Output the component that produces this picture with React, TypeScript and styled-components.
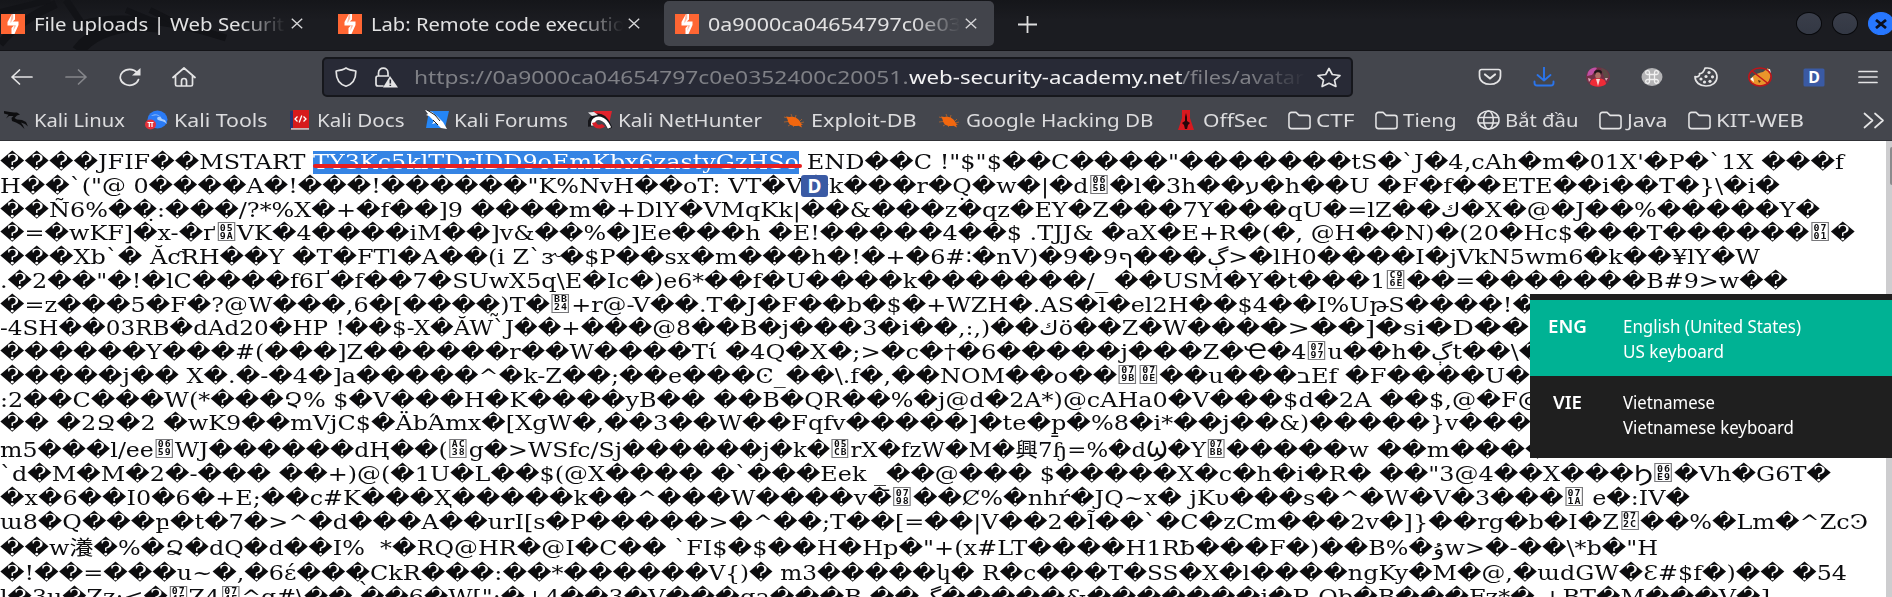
import React, { useLayoutEffect, useRef } from "react";
import styled, { createGlobalStyle } from "styled-components";

const Global = createGlobalStyle`
  html, body { margin: 0; padding: 0; overflow: hidden; background: #fff; }
  * { box-sizing: border-box; }
`;

const SANS = `"Noto Sans", "Open Sans", sans-serif`;

/* ---------- text stretched to a given width ---------- */

const FitBox = styled.span<{ $w: number }>`
  display: block;
  flex: none;
  width: ${(p) => p.$w}px;
  white-space: pre;
`;
const FitInner = styled.span`
  display: inline-block;
  white-space: pre;
  transform-origin: 0 50%;
`;

function Fit({ w, children }: { w: number; children: React.ReactNode }) {
  const ref = useRef<HTMLSpanElement>(null);
  useLayoutEffect(() => {
    const el = ref.current;
    if (!el) return;
    el.style.transform = "none";
    const natural = el.getBoundingClientRect().width;
    if (natural > 0) el.style.transform = `scaleX(${w / natural})`;
  });
  return (
    <FitBox $w={w}>
      <FitInner ref={ref}>{children}</FitInner>
    </FitBox>
  );
}

/* ---------- frame ---------- */

const Screen = styled.div`
  position: relative;
  width: 1892px;
  height: 597px;
  overflow: hidden;
  display: flex;
  flex-direction: column;
  background: #fff;
  font-family: ${SANS};
`;

/* ---------- tab strip ---------- */

const TabStrip = styled.div`
  position: relative;
  flex: none;
  height: 51px;
  display: flex;
  align-items: flex-start;
  padding-top: 1px;
  background: linear-gradient(#15161a, #1b1c21 40%, #1b1c21);
  border-bottom: 1px solid #131317;
`;
const Watermark = styled.svg`
  position: absolute;
  left: 0;
  top: 0;
`;
const Tab = styled.div<{ $active?: boolean; $first?: boolean }>`
  position: relative;
  flex: none;
  width: 330px;
  height: 45px;
  margin-left: ${(p) => (p.$first ? -10 : 7)}px;
  padding-left: 11px;
  display: flex;
  align-items: center;
  border-radius: 5px;
  background: ${(p) => (p.$active ? "#42444b" : "transparent")};
`;
const TabTitle = styled.div`
  width: 254px;
  margin-left: 9px;
  overflow: hidden;
  color: #e2e2e3;
  font-size: 18px;
  line-height: 28px;
  mask-image: linear-gradient(90deg, #000 205px, transparent 252px);
`;
const TabClose = styled.svg`
  margin-left: 3px;
  flex: none;
`;
const NewTab = styled.svg`
  margin: 15px 0 0 24px;
  flex: none;
`;
const WindowButtons = styled.div`
  display: flex;
  gap: 10px;
  margin: 11px -2px 0 auto;
`;
const WindowButton = styled.div<{ $close?: boolean }>`
  width: 26px;
  height: 23px;
  border-radius: 50%;
  display: flex;
  align-items: center;
  justify-content: center;
  border: 1px solid ${(p) => (p.$close ? "#2777ff" : "#08090c")};
  background: ${(p) => (p.$close ? "#2777ff" : "linear-gradient(#3a3e4a, #333844)")};
`;

/* ---------- navigation bar ---------- */

const NavBar = styled.div`
  flex: none;
  height: 50px;
  display: flex;
  align-items: center;
  background: #44464d;
  padding: 2px 11px 0 10px;
`;
const NavButtons = styled.div`
  flex: none;
  width: 312px;
  display: flex;
  align-items: center;
  gap: 30px;
`;
const UrlBar = styled.div`
  flex: none;
  width: 1031px;
  height: 40px;
  display: flex;
  align-items: center;
  padding: 0 9px 0 11px;
  border: 2px solid #16171c;
  border-radius: 5px;
  background: #282a36;
  font-size: 18.5px;
  line-height: 28px;
  svg { flex: none; }
`;
const Lock = styled.svg`
  margin-left: 17px;
`;
const UrlText = styled.div`
  display: flex;
  flex: none;
  width: 894px;
  margin: 0 auto 0 16px;
  color: #7f8086;
  mask-image: linear-gradient(90deg, #000 835px, transparent 892px);
`;
const Host = styled.span`
  color: #f2f2f3;
`;
const Extensions = styled.div`
  margin-left: auto;
  display: flex;
  gap: 28px;
  svg { flex: none; }
`;

/* ---------- bookmarks ---------- */

const Bookmarks = styled.div`
  flex: none;
  height: 40px;
  display: flex;
  align-items: center;
  gap: 20px;
  padding: 0 7px 1px 4px;
  background: #44464d;
  border-bottom: 1px solid #303136;
  box-shadow: 0 1px 0 #5c5d62;
`;
const Bookmark = styled.div`
  display: flex;
  align-items: center;
  gap: 5.5px;
  color: #dcdcde;
  font-size: 17.6px;
  line-height: 26px;
`;
const Overflow = styled.svg`
  margin-left: auto;
`;

/* ---------- document ---------- */

const Page = styled.div`
  flex: 1;
  min-height: 0;
  display: flex;
  background: #fff;
`;
const Doc = styled.div`
  flex: 1;
  min-width: 0;
  padding-top: 10px;
  overflow: hidden;
  color: #0c0c0e;
  font-family: "DejaVu Serif", "DejaVu Sans", "Noto Sans CJK JP", serif;
  font-size: 20.4px;
`;
const Line = styled.div<{ $tall?: boolean }>`
  position: relative;
  display: flex;
  height: ${(p) => (p.$tall ? 27.4 : 23.75)}px;
  padding-top: ${(p) => (p.$tall ? 2.8 : 0)}px;
  line-height: 23.75px;
  direction: ltr;
  unicode-bidi: bidi-override;
  span { unicode-bidi: inherit; }
`;
const Selected = styled.div`
  position: relative;
  height: 23px;
  color: #fff;
  background: #3584e4;
`;
const RedStroke = styled.div`
  position: absolute;
  left: 0;
  top: 12.5px;
  width: 489px;
  height: 4.5px;
  border-radius: 2px;
  background: #e81e1f;
`;
const Hex = styled.span`
  display: inline-grid;
  grid-template-columns: 6px 6px;
  grid-template-rows: 8px 8px;
  justify-content: center;
  align-content: center;
  justify-items: center;
  width: 15px;
  height: 19px;
  margin: 0 1.5px;
  vertical-align: 9.5px;
  border: 1px solid #77777a;
  font: bold 8.5px/8px "DejaVu Sans Mono", monospace;
`;
const DIcon = styled.div`
  position: absolute;
  left: 801px;
  top: 0;
  width: 27px;
  height: 22px;
  border-radius: 3px;
  background: #3a5aa4;
  color: #fff;
  font: bold 19px/22px ${SANS};
  text-align: center;
`;
const Scrollbar = styled.div`
  flex: none;
  width: 6px;
  padding: 6px 0 0 4px;
  background: #cdcdcf;
`;
const Thumb = styled.div`
  height: 38px;
  border-radius: 2px 0 0 2px;
  background: #8b8b8d;
`;

/* ---------- input language popup ---------- */

const Popup = styled.div`
  position: absolute;
  left: 1530px;
  top: 294px;
  width: 362px;
  height: 164px;
  display: flex;
  flex-direction: column;
  padding-top: 6px;
  background: #1f1f1f;
  color: #fff;
  font-family: ${SANS};
`;
const Language = styled.div<{ $active?: boolean }>`
  flex: none;
  height: 76px;
  display: flex;
  padding: 14px 0 0 ${(p) => (p.$active ? 18 : 23)}px;
  background: ${(p) => (p.$active ? "#00b294" : "transparent")};
  font-size: 18px;
  line-height: 25px;
`;
const Code = styled.div<{ $active?: boolean }>`
  width: ${(p) => (p.$active ? 75 : 70)}px;
  font-weight: 600;
`;

/* ---------- icons ---------- */

const Burp = () => (
  <svg width="24" height="20" viewBox="0 0 24 20">
    <rect width="24" height="20" fill="#ff6633" />
    <path d="M11 0h3v5.500l-2.200 2H17.500v3.500L13.500 20h-3v-6l2.500-2.500H6.500V8z" fill="#fff" />
    <path d="M10.800 0h1.400v4.500L10 8.500h-.8zM13.200 11l2 .5-3 5.500z" fill="#ff6633" opacity=".45" />
  </svg>
);
const Cross = () => (
  <TabClose width="12" height="11" viewBox="0 0 12 11">
    <path d="M.8.8l10.400 9.400M11.200.8.8 10.200" stroke="#d6d6d8" strokeWidth="1.400" />
  </TabClose>
);
const line = { fill: "none", stroke: "#e4e4e5", strokeWidth: 1.7, strokeLinecap: "round" as const, strokeLinejoin: "round" as const };

const Folder = () => (
  <svg width="23" height="19" viewBox="0 0 24 19" preserveAspectRatio="none">
    <path d="M1 4a2.600 2.600 0 0 1 2.600-2.600h4.800l3.200 3h9A2.400 2.400 0 0 1 23 6.800v8.400a2.400 2.400 0 0 1-2.400 2.400H3.600A2.600 2.600 0 0 1 1 15z" {...line} strokeWidth={1.6} />
  </svg>
);
const Bug = () => (
  <svg width="24" height="19" viewBox="0 0 24 19">
    <path d="M2 6l7 2M2 11l8-1M9 3l2 5M14 4l-1 4M6 15l5-3M20 8l-3 3M22 11l-4 1M11 16l3-3" stroke="#a8612f" strokeWidth=".9" />
    <path d="M4 5.500 7.500 6c3-1 7 0 9.500 3l2 3.500 2 .8-2 .7L20 16.500l-3.500-1.800c-3.500 1-7.500 0-9.500-2.200C5.500 10.500 6 7.500 4 5.500z" fill="#f2670f" />
  </svg>
);

const bookmarkIcons = {
  kali: (
    <svg width="24" height="20" viewBox="0 0 24 20">
      <path d="M0 1 6 2 10 2.500 13 2.500 16 4.500 13 5.500 10.500 8 13 9.500 18 10 22 12 24 16.500 21 14 17 12.500 19 15.500 20.500 19 16.500 15 12 12.500 8 11 7.500 8 9.500 6 5 6 2 8.500 4.500 4.800 0 3.500z" fill="#0d0d0f" />
    </svg>
  ),
  tools: (
    <svg width="24" height="20" viewBox="0 0 24 20">
      <ellipse cx="12.500" cy="9.500" rx="10" ry="9" fill="#2a7bf6" />
      <path d="M6 6c5-3 9-1 11 3l3 1 2 4c-3-3-6-3-9-4-2-2 0-4 3-3-3-2-6-2-10-1z" fill="#a9cdfb" />
      <ellipse cx="5.500" cy="14.500" rx="5.500" ry="5" fill="#e5323a" />
      <path d="M2.500 12.500h6M4.300 12.500v4.500M7 12.500v4.500" stroke="#fff" strokeWidth="1.200" />
    </svg>
  ),
  docs: (
    <svg width="24" height="20" viewBox="0 0 24 20">
      <path d="M2 1h5v18H2z" fill="#28336e" />
      <path d="M5 0h16v18H5z" fill="#d61a1c" />
      <path d="M3 18h18v1.800H3z" fill="#c9b3b5" />
      <path d="M9.500 6.500 7 9l2.500 2.500M15.500 6.500 18 9l-2.500 2.500M13.800 5.500l-2.600 7" stroke="#fff" strokeWidth="1.300" fill="none" />
    </svg>
  ),
  forums: (
    <svg width="24" height="20" viewBox="0 0 24 20">
      <path d="M4 1h20l-4 17H1z" fill="#2586f5" />
      <path d="M0 0l7 2 6 5 5 5 4 7-6-1-5-5-4 1 2-3-5-5-3-1 2-1z" fill="#fff" />
      <path d="M2 0l8 5 5 6M8 10l5 5" stroke="#222" strokeWidth="1" fill="none" />
    </svg>
  ),
  nethunter: (
    <svg width="24" height="20" viewBox="0 0 24 20">
      <path d="M5 1h19l-3.500 15L12 9z" fill="#e0222c" />
      <path d="M2 16.500C1 9 7 4.500 12.500 6.500c5 1.500 7 6 9.500 12" fill="none" stroke="#16161a" strokeWidth="5" />
      <path d="M5 15.500C4 10 8 7.500 12.500 8.500c4.500 1 6.500 4 9 9.500" fill="none" stroke="#fff" strokeWidth="3.600" />
      <path d="M4 13c2 6 8 7 13 3.500l-3-2.500c-2.500 1.500-5 1-6-2z" fill="#d8202a" />
      <path d="M0 2.500l6-.5 4 3-6 1z" fill="#e8e8ea" />
    </svg>
  ),
  bug: <Bug />,
  offsec: (
    <svg width="24" height="20" viewBox="0 0 24 20">
      <path d="M8 0h8v8l4 12H4l4-12z" fill="#d8191f" />
      <path d="M12 3l1 4v4l3 2-2 2-1 4h-2l-1-4-2-2 3-2V7z" fill="#26060a" />
    </svg>
  ),
  folder: <Folder />,
  globe: (
    <svg width="23" height="20" viewBox="0 0 24 20" preserveAspectRatio="none">
      <g {...line} strokeWidth={1.6}>
        <ellipse cx="12" cy="10" rx="11" ry="9" />
        <ellipse cx="12" cy="10" rx="5" ry="9" />
        <path d="M1.500 7.500h21M1.500 13h21" />
      </g>
    </svg>
  ),
};

const bookmarks: [keyof typeof bookmarkIcons, string, number][] = [
  ["kali", "Kali Linux", 91],
  ["tools", "Kali Tools", 93.5],
  ["docs", "Kali Docs", 87.5],
  ["forums", "Kali Forums", 114],
  ["nethunter", "Kali NetHunter", 144],
  ["bug", "Exploit-DB", 105.5],
  ["bug", "Google Hacking DB", 187.5],
  ["offsec", "OffSec", 64.5],
  ["folder", "CTF", 38.5],
  ["folder", "Tieng", 53.5],
  ["globe", "Bắt đầu", 73.5],
  ["folder", "Java", 40.5],
  ["folder", "KIT-WEB", 88],
];

/* ---------- document text: [text, width] runs; ⟦xxxx⟧ is a code point box ---------- */

type Run = [string, number];
const lines: { runs: Run[]; tall?: boolean; icon?: boolean }[] = [
  { runs: [["H��`(\"@ 0����A�!���!������\"K%NvH��oT: VT�V", 803], ["�", 26], ["k���r�Q̣�w�|�d⟦065B⟧�l�3h��ע", 431], ["�h��U �F�f��ETE��i��T�}\\�i�", 520]], icon: true },
  { runs: [["��Ñ6%��̣:���/?*%X�+�f��]9 ����m�", 616], ["+DlY�VMqKk|��&���z�qz�EY�Z���7Y�", 622], ["��qU�=lZ��ك�X�@�J��%�����Y�", 582]] },
  { runs: [["�=�wKF]�x-�ґ⟦059A⟧VK�4����iM��]v&��%�]", 640], ["Ee���h �E!�����4��$ .TJJ& �aX�E+R�(", 631], ["�, @H��N)�(20�Hc$���T������⟦0701⟧�", 584]] },
  { runs: [["���Xb`� ĂƈRH��Y �T�FTl�A��(i Z`ɝ�$P�", 640], ["�sx�m���h�!�+�6#∶�nV)�9�9ף���ڳ>�", 633], ["lH0����I�jVkN5wm6�k��¥lY�W", 487]] },
  { runs: [[".�2��\"�!�lC����f6Ґ�f��7�SUwX5q\\E�Ic�", 654], [")e6*��f�U����k�������/_ ��USM�Y", 609], ["�t���1⟦C96E⟧��=�������B#9>w��", 525]] },
  { runs: [["�=z���5�F�?@W���,6�[����̰)T�⟦BB24⟧+r@-V", 650], ["��.T�J�F��b�$�+WZH�.AS�l̅�el2H��$4", 618], ["��I%UթS����!�", 269]] },
  { runs: [["-4SH��03RB�dAd20�HP !��$-X�ĂW`J��+��", 628], ["�@8��B�j���3�i��,:,)��كö��Z�W���", 632], ["�>��]�si�D��", 269]] },
  { runs: [["������Y���#(���]Z������r��W���", 667], ["�Tί �4Q�X�;>�c�†�6�����j���Z�Ҽ", 600], ["�4⟦0797⟧u��h�ڳt��\\�", 276]] },
  { runs: [["�����j�� X�.�-�4�]a�����^�k-Z��;��", 668], ["e���Ͼ_��\\.f�,��NOM��o��⟦079B⟧⟦070E⟧��u���", 629], ["בEf �F����U�", 233]] },
  { runs: [[":2��C���W(*���Չ% $�V���H�K����y", 639], ["B�� ��B�QR��%�j@d�2A*)@cAHa0�V���", 644], ["$d�2A ��$,@�F@", 259]] },
  { runs: [["�� �2Ջ�2 �wK9��mVjC$�ÄbΆmx�[XgW�,��", 653], ["3��W��Fqfv�����]�te�p̱�%8�i*��j��", 626], ["&)�����}v���", 252]] },
  { runs: [["m5���l/ee⟦0659⟧WJ������dҢ��(⟦AC38⟧g�>WSfc/Sj", 622], ["������j�k�⟦05CB⟧rX�fzW�M�興7ɧ=%�dϢ�Y⟦07BB⟧��", 651], ["���w ��m����", 277]], tall: true },
  { runs: [["`d�M�M�2�-��� ��+)@(�1U�L��$(@X��", 654], ["�� �`���Eek _��@��� $�����X�c�h", 618], ["�i�R� ��\"3@4��X���Ϧ⟦06E9⟧�Vh�G6T�", 559]] },
  { runs: [["�x�6��I0�6�+E;��c#K���Ҳ�����k��", 637], ["^���W����v�̄⟦0798⟧��Ȼ%�nhŕ�JQ~x� jKυ�", 617], ["��s�^�W�V�3���⟦071A⟧ e�:IV�", 436]] },
  { runs: [["ɯ8�Q���բ�t�7�>^�d���A��urI[s�P��", 635], ["���>�^��;T��[=��|V��2�l̃��`�C�zC", 619], ["m���2v�]}��rg�b�I�Z⟦072C⟧��%�Lm�^ZcϿ", 614]] },
  { runs: [["��w瀁�%�Ձ�dQ�d��I%  *�RQ@HR�@I�C�", 642], ["� `FI$�$��H�Hp�\"+(x#LT����H1Rƀ���", 627], ["F�)��B%�ۇw>�-��\\*b�\"H", 389]], tall: true },
  { runs: [["�!��=���u~�,�6έ���̖CkR���:��*���", 637], ["���V{)� m3�����կ� R�c���T�SS�X�l", 613], ["����ngKy�M�@,�ɯdGW�Ɛ#$f�)�� �54", 597]] },
  { runs: [["l�3u�Zz:<�⟦074E⟧Z4⟦074E⟧^q#\\��.��6�W[\":�+4��3�", 648], ["V���qa���B ��گ�����&�������j", 620], ["�R Qb�B���Fz*� +BT�M���V�]", 502]] },
];

const withBoxes = (text: string) =>
  text.split(/⟦(.{4})⟧/).map((part, i) =>
    i % 2 ? (
      <Hex key={i}>
        {part.split("").map((c, j) => (
          <b key={j}>{c}</b>
        ))}
      </Hex>
    ) : (
      part
    )
  );

export default function App() {
  return (
    <Screen>
      <Global />
      <TabStrip>
        <Watermark width="240" height="51" viewBox="0 0 240 51">
          <g fill="none" stroke="#121317">
            <path d="M0 44C14 26 34 14 56 4" strokeWidth="8" />
            <path d="M66 0 82 24C110 16 160 16 226 38" strokeWidth="7" />
            <path d="M78 51C92 32 120 22 158 26" strokeWidth="13" />
            <path d="M0 12 50 0M126 10l34 14M150 10l36 18" strokeWidth="6" />
          </g>
        </Watermark>
        <Tab $first>
          <Burp />
          <TabTitle><Fit w={250}>File uploads | Web Securit</Fit></TabTitle>
          <Cross />
        </Tab>
        <Tab>
          <Burp />
          <TabTitle><Fit w={254}>Lab: Remote code executio</Fit></TabTitle>
          <Cross />
        </Tab>
        <Tab $active>
          <Burp />
          <TabTitle><Fit w={253}>0a9000ca04654797c0e03</Fit></TabTitle>
          <Cross />
        </Tab>
        <NewTab width="19" height="17" viewBox="0 0 19 17">
          <path d="M0 8.500h19M9.500 0v17" stroke="#dededf" strokeWidth="1.800" />
        </NewTab>
        <WindowButtons>
          <WindowButton />
          <WindowButton />
          <WindowButton $close>
            <svg width="12" height="10" viewBox="0 0 12 10">
              <path d="M1 1l10 8M11 1 1 9" stroke="#0b1020" strokeWidth="2.800" />
            </svg>
          </WindowButton>
        </WindowButtons>
      </TabStrip>

      <NavBar>
        <NavButtons>
          <svg width="24" height="20" viewBox="0 0 24 20">
            <path d="M2 10h20M9.500 3 2 10l7.500 7" {...line} />
          </svg>
          <svg width="24" height="20" viewBox="0 0 24 20">
            <path d="M22 10H2M14.500 3 22 10l-7.500 7" {...line} stroke="#85868b" />
          </svg>
          <svg width="24" height="20" viewBox="0 0 24 20">
            <path d="M20.500 12.500A9.300 8 0 1 1 19 5.500" {...line} />
            <path d="M22.500 1v7.500h-8.500z" fill="#e4e4e5" />
          </svg>
          <svg width="24" height="20" viewBox="0 0 24 20">
            <path d="M1 10.500 12 1l11 9.500M3.500 9v8.500a1.500 1.500 0 0 0 1.500 1.500h14a1.500 1.500 0 0 0 1.500-1.500V9M9.500 18.500V14a2.500 2.500 0 0 1 5 0v4.500" {...line} />
          </svg>
        </NavButtons>
        <UrlBar>
          <svg width="22" height="20" viewBox="0 0 22 20">
            <path d="M11 1C8 3 5 3.500 1.200 4 1 12 4 17 11 19.200 18 17 21 12 20.800 4 17 3.500 14 3 11 1z" {...line} />
          </svg>
          <Lock width="24" height="21" viewBox="0 0 24 21">
            <path d="M9 19H4a2 2 0 0 1-2-2v-6a2 2 0 0 1 2-2h10.500M4.500 9V6c0-6.500 9.500-6.500 9.500 0v3" {...line} />
            <path d="M16 9l8 11.500H9z" fill="#e4e4e5" />
            <path d="M16.300 12.500v4M16.300 17.800v1.300" stroke="#282a36" strokeWidth="1.600" />
          </Lock>
          <UrlText>
            <Fit w={494.5}>https://0a9000ca04654797c0e0352400c20051.</Fit>
            <Host><Fit w={273.5}>web-security-academy.net</Fit></Host>
            <Fit w={122}>/files/avatar</Fit>
          </UrlText>
          <svg width="26" height="21" viewBox="0 0 26 21">
            <path d="M13 1.500l3.300 6 7.700 1-5.500 4.600 1.400 6.400L13 16.300l-6.900 3.200 1.400-6.400L2 8.500l7.700-1z" {...line} />
          </svg>
        </UrlBar>
        <Extensions>
          <svg width="26" height="20" viewBox="0 0 26 20">
            <path d="M4.500 2.500h17a2 2 0 0 1 2 2V9c0 11-21 11-21 0V4.500a2 2 0 0 1 2-2z" {...line} />
            <path d="M8 7.500l5 4 5-4" {...line} strokeWidth={2.2} />
          </svg>
          <svg width="26" height="20" viewBox="0 0 26 20">
            <path d="M13 .5v13M6.500 8l6.500 5.500L19.500 8M3.500 14.500v1.500a2.500 2.500 0 0 0 2.500 2.500h14a2.500 2.500 0 0 0 2.500-2.500v-1.500" {...line} stroke="#2b74ea" strokeWidth={1.9} />
          </svg>
          <svg width="26" height="20" viewBox="0 0 26 20">
            <ellipse cx="13" cy="10" rx="12" ry="9.800" fill="#733047" />
            <path d="M3 5c3-5 8-5 9-4L7 8 2 9z" fill="#c04fa5" />
            <path d="M16 1c5 1 8 5 8 9l-4 3-2-6z" fill="#5d4a45" />
            <path d="M9 5c2-3 7-3 8 0l-1 3h-6z" fill="#1f1519" />
            <ellipse cx="13" cy="8.500" rx="2.800" ry="3.200" fill="#b06f66" />
            <path d="M5 17c0-3 2-5 5-5.500h6c3 .5 5 2.500 5 5.500-4 3.500-12 3.500-16 0z" fill="#ef2b37" />
            <path d="M11 12l2 7 2-7z" fill="#f6d9d7" />
            <path d="M3 11l3 1-2 3zM20 11l3 0-2 3z" fill="#e3a9b8" />
          </svg>
          <svg width="26" height="20" viewBox="0 0 26 20">
            <ellipse cx="13" cy="10" rx="10.500" ry="9" fill="#b4b4b6" />
            <path d="M10.500 7.500h5v5h-5zM10.500 7.500H8.700A1.900 1.900 0 1 1 10.500 5.500zM15.500 7.500V5.500a1.900 1.900 0 1 1 1.800 2zM15.500 12.500h1.800a1.900 1.900 0 1 1-1.800 1.800zM10.500 12.500v1.800a1.900 1.900 0 1 1-1.800-1.800z" fill="none" stroke="#f2f2f2" strokeWidth="1.300" />
          </svg>
          <svg width="26" height="20" viewBox="0 0 26 20">
            <path d="M12 1.200C19 0 24 4.500 24 10s-5 9-11 9S2 15.500 2 9.500c3 1 5-.5 4.500-3C9.500 7 11 4 12 1.200z" {...line} />
            <g fill="#e4e4e5">
              <circle cx="16" cy="5.500" r="1.600" /><circle cx="19.500" cy="9.800" r="1.600" /><circle cx="13" cy="9.500" r="1.600" />
              <circle cx="8" cy="12" r="1.600" /><circle cx="11.500" cy="15" r="1.600" /><circle cx="17" cy="14.300" r="1.600" />
            </g>
          </svg>
          <svg width="26" height="20" viewBox="0 0 26 20">
            <path d="M3 14c1-5 7-8 13-9l5-4 3 7-3 8c-6 4-14 3-18-2z" fill="#e9952b" />
            <path d="M20 3l3-1 1 5zM3 12l3-2 1 5z" fill="#fff" />
            <path d="M11 13l3 1-2 2z" fill="#5b3310" />
            <ellipse cx="13" cy="10" rx="11.200" ry="9" fill="none" stroke="#c0151a" strokeWidth="1.500" />
            <path d="M5 4l16 12.500" stroke="#c0151a" strokeWidth="1.500" />
          </svg>
          <svg width="26" height="20" viewBox="0 0 26 20">
            <rect x="2.500" y="1.500" width="21" height="18" rx="1.500" fill="#3a5aa4" />
            <text x="13" y="16" textAnchor="middle" fontFamily="Noto Sans" fontWeight="700" fontSize="16" fill="#fff">D</text>
          </svg>
          <svg width="26" height="20" viewBox="0 0 26 20">
            <path d="M4 4.500h18M4 10h18M4 15.500h18" {...line} strokeWidth={1.7} />
          </svg>
        </Extensions>
      </NavBar>

      <Bookmarks>
        {bookmarks.map(([icon, label, w]) => (
          <Bookmark key={label}>
            {bookmarkIcons[icon]}
            <Fit w={w}>{label}</Fit>
          </Bookmark>
        ))}
        <Overflow width="22" height="17" viewBox="0 0 22 17">
          <path d="M1.500 1.500 9.500 8.500l-8 7M12 1.500l8 7-8 7" {...line} />
        </Overflow>
      </Bookmarks>

      <Page>
        <Doc>
          <Line>
            <Fit w={313}>����JFIF��MSTART </Fit>
            <Selected>
              <Fit w={486}>TY3Kc5klTDrIDD9oEmKbx6zastyGzHSo</Fit>
              <RedStroke />
            </Selected>
            <Fit w={380}>{` END��C !"$"$��C����"`}</Fit>
            <Fit w={665}>{"�������tS�`J�4,cAh�m�01X'�P�`1X ���f"}</Fit>
          </Line>
          {lines.map((l, i) => (
            <Line key={i} $tall={l.tall}>
              {l.runs.map(([text, w], j) => (
                <Fit key={j} w={w}>{withBoxes(text)}</Fit>
              ))}
              {l.icon && <DIcon>D</DIcon>}
            </Line>
          ))}
        </Doc>
        <Scrollbar><Thumb /></Scrollbar>
      </Page>

      <Popup>
        <Language $active>
          <Code $active><Fit w={39}>ENG</Fit></Code>
          <div>
            <Fit w={178}>English (United States)</Fit>
            <Fit w={101}>US keyboard</Fit>
          </div>
        </Language>
        <Language>
          <Code><Fit w={29}>VIE</Fit></Code>
          <div>
            <Fit w={92}>Vietnamese</Fit>
            <Fit w={171}>Vietnamese keyboard</Fit>
          </div>
        </Language>
      </Popup>
    </Screen>
  );
}
